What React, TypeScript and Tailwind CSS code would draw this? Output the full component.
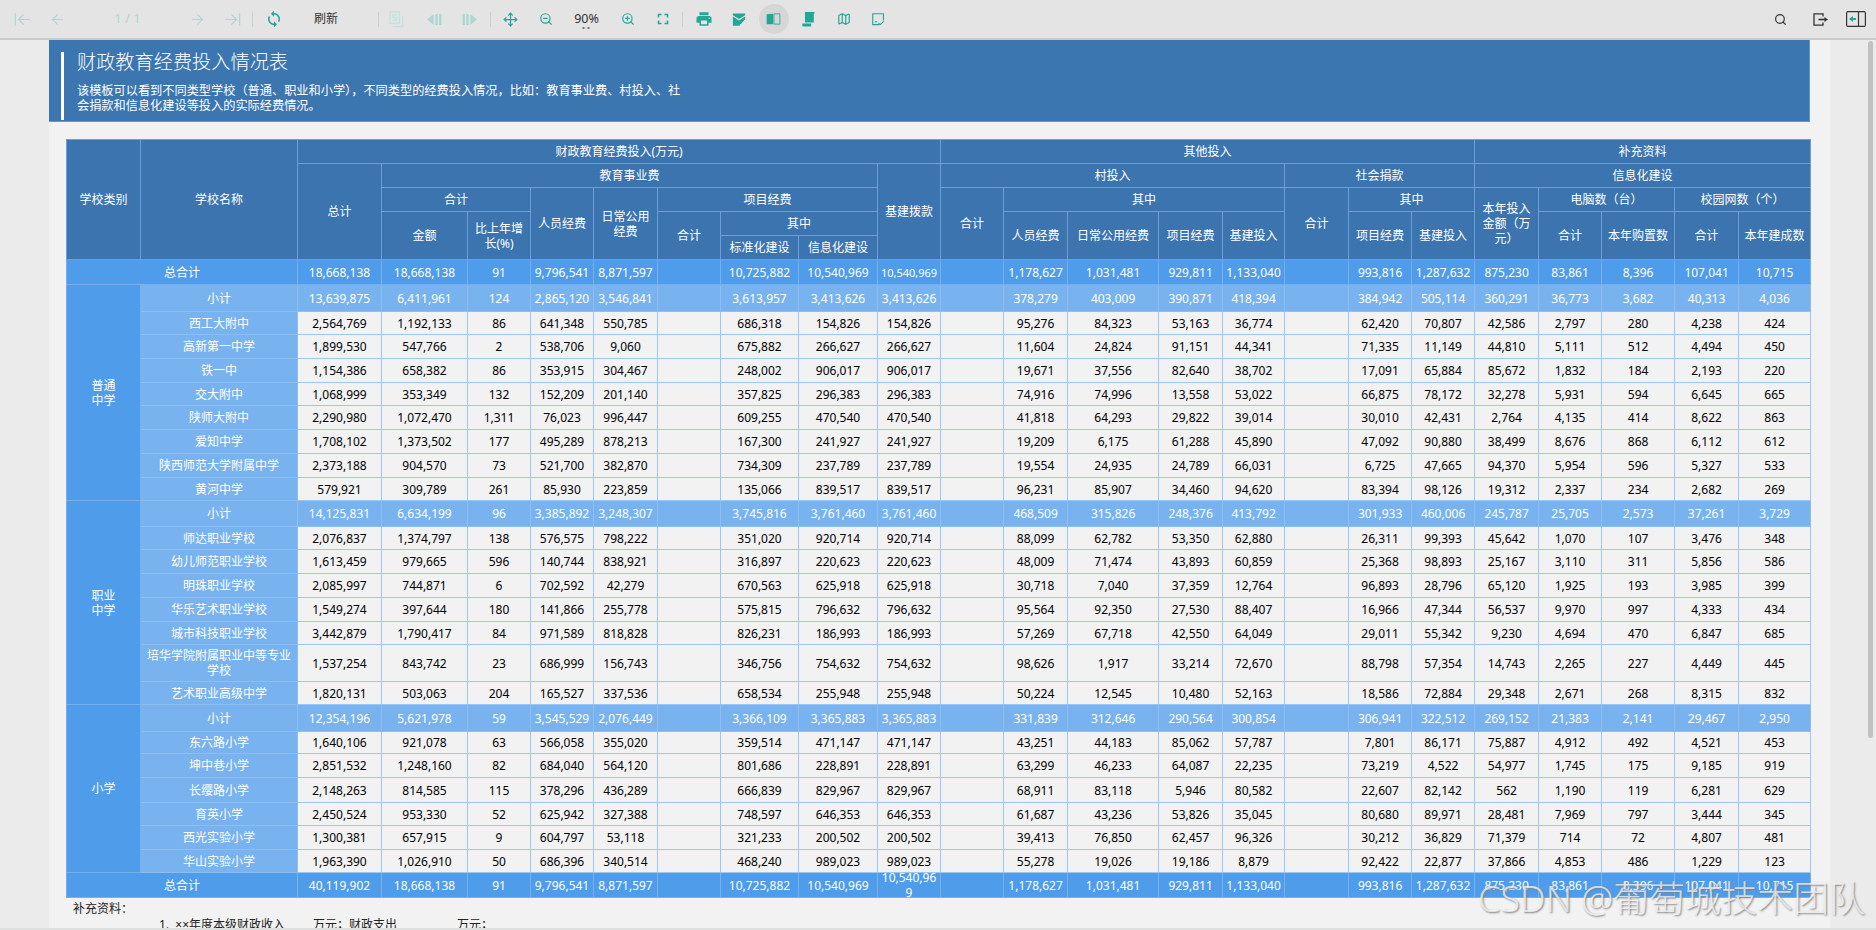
import { ArrowLeftToLine, ArrowLeft, ArrowRight, ArrowRightToLine, Search, ZoomIn, ZoomOut, Move, Map as MapIcon } from "lucide-react";
import { MdSync, MdPrint, MdFullscreen } from "react-icons/md";

const colWidths = [
  "w-[74px]", "w-[157px]", "w-[84px]", "w-[86px]", "w-[63px]", "w-[63px]", "w-[64px]", "w-[63px]",
  "w-[78px]", "w-[79px]", "w-[63px]", "w-[63px]", "w-[64px]", "w-[91px]", "w-[64px]", "w-[62px]",
  "w-[64px]", "w-[63px]", "w-[63px]", "w-[64px]", "w-[63px]", "w-[73px]", "w-[64px]", "w-[72px]",
];

type Row = { name: string; vals: string; h: string };

const groups: { label: string[]; rows: Row[] }[] = [
  {
    label: ["普通", "中学"],
    rows: [
      { name: "小计", h: "h-[27px]", vals: "13,639,875 6,411,961 124 2,865,120 3,546,841 _ 3,613,957 3,413,626 3,413,626 _ 378,279 403,009 390,871 418,394 _ 384,942 505,114 360,291 36,773 3,682 40,313 4,036" },
      { name: "西工大附中", h: "h-[23px]", vals: "2,564,769 1,192,133 86 641,348 550,785 _ 686,318 154,826 154,826 _ 95,276 84,323 53,163 36,774 _ 62,420 70,807 42,586 2,797 280 4,238 424" },
      { name: "高新第一中学", h: "h-[24px]", vals: "1,899,530 547,766 2 538,706 9,060 _ 675,882 266,627 266,627 _ 11,604 24,824 91,151 44,341 _ 71,335 11,149 44,810 5,111 512 4,494 450" },
      { name: "铁一中", h: "h-[24px]", vals: "1,154,386 658,382 86 353,915 304,467 _ 248,002 906,017 906,017 _ 19,671 37,556 82,640 38,702 _ 17,091 65,884 85,672 1,832 184 2,193 220" },
      { name: "交大附中", h: "h-[23px]", vals: "1,068,999 353,349 132 152,209 201,140 _ 357,825 296,383 296,383 _ 74,916 74,996 13,558 53,022 _ 66,875 78,172 32,278 5,931 594 6,645 665" },
      { name: "陕师大附中", h: "h-[24px]", vals: "2,290,980 1,072,470 1,311 76,023 996,447 _ 609,255 470,540 470,540 _ 41,818 64,293 29,822 39,014 _ 30,010 42,431 2,764 4,135 414 8,622 863" },
      { name: "爱知中学", h: "h-[24px]", vals: "1,708,102 1,373,502 177 495,289 878,213 _ 167,300 241,927 241,927 _ 19,209 6,175 61,288 45,890 _ 47,092 90,880 38,499 8,676 868 6,112 612" },
      { name: "陕西师范大学附属中学", h: "h-[24px]", vals: "2,373,188 904,570 73 521,700 382,870 _ 734,309 237,789 237,789 _ 19,554 24,935 24,789 66,031 _ 6,725 47,665 94,370 5,954 596 5,327 533" },
      { name: "黄河中学", h: "h-[23px]", vals: "579,921 309,789 261 85,930 223,859 _ 135,066 839,517 839,517 _ 96,231 85,907 34,460 94,620 _ 83,394 98,126 19,312 2,337 234 2,682 269" },
    ],
  },
  {
    label: ["职业", "中学"],
    rows: [
      { name: "小计", h: "h-[26px]", vals: "14,125,831 6,634,199 96 3,385,892 3,248,307 _ 3,745,816 3,761,460 3,761,460 _ 468,509 315,826 248,376 413,792 _ 301,933 460,006 245,787 25,705 2,573 37,261 3,729" },
      { name: "师达职业学校", h: "h-[23px]", vals: "2,076,837 1,374,797 138 576,575 798,222 _ 351,020 920,714 920,714 _ 88,099 62,782 53,350 62,880 _ 26,311 99,393 45,642 1,070 107 3,476 348" },
      { name: "幼儿师范职业学校", h: "h-[24px]", vals: "1,613,459 979,665 596 140,744 838,921 _ 316,897 220,623 220,623 _ 48,009 71,474 43,893 60,859 _ 25,368 98,893 25,167 3,110 311 5,856 586" },
      { name: "明珠职业学校", h: "h-[24px]", vals: "2,085,997 744,871 6 702,592 42,279 _ 670,563 625,918 625,918 _ 30,718 7,040 37,359 12,764 _ 96,893 28,796 65,120 1,925 193 3,985 399" },
      { name: "华乐艺术职业学校", h: "h-[24px]", vals: "1,549,274 397,644 180 141,866 255,778 _ 575,815 796,632 796,632 _ 95,564 92,350 27,530 88,407 _ 16,966 47,344 56,537 9,970 997 4,333 434" },
      { name: "城市科技职业学校", h: "h-[23px]", vals: "3,442,879 1,790,417 84 971,589 818,828 _ 826,231 186,993 186,993 _ 57,269 67,718 42,550 64,049 _ 29,011 55,342 9,230 4,694 470 6,847 685" },
      { name: "培华学院附属职业中等专业学校", h: "h-[37px]", vals: "1,537,254 843,742 23 686,999 156,743 _ 346,756 754,632 754,632 _ 98,626 1,917 33,214 72,670 _ 88,798 57,354 14,743 2,265 227 4,449 445" },
      { name: "艺术职业高级中学", h: "h-[23px]", vals: "1,820,131 503,063 204 165,527 337,536 _ 658,534 255,948 255,948 _ 50,224 12,545 10,480 52,163 _ 18,586 72,884 29,348 2,671 268 8,315 832" },
    ],
  },
  {
    label: ["小学"],
    rows: [
      { name: "小计", h: "h-[27px]", vals: "12,354,196 5,621,978 59 3,545,529 2,076,449 _ 3,366,109 3,365,883 3,365,883 _ 331,839 312,646 290,564 300,854 _ 306,941 322,512 269,152 21,383 2,141 29,467 2,950" },
      { name: "东六路小学", h: "h-[22px]", vals: "1,640,106 921,078 63 566,058 355,020 _ 359,514 471,147 471,147 _ 43,251 44,183 85,062 57,787 _ 7,801 86,171 75,887 4,912 492 4,521 453" },
      { name: "坤中巷小学", h: "h-[24px]", vals: "2,851,532 1,248,160 82 684,040 564,120 _ 801,686 228,891 228,891 _ 63,299 46,233 64,087 22,235 _ 73,219 4,522 54,977 1,745 175 9,185 919" },
      { name: "长缨路小学", h: "h-[25px]", vals: "2,148,263 814,585 115 378,296 436,289 _ 666,839 829,967 829,967 _ 68,911 83,118 5,946 80,582 _ 22,607 82,142 562 1,190 119 6,281 629" },
      { name: "育英小学", h: "h-[23px]", vals: "2,450,524 953,330 52 625,942 327,388 _ 748,597 646,353 646,353 _ 61,687 43,236 53,826 35,045 _ 80,680 89,971 28,481 7,969 797 3,444 345" },
      { name: "西光实验小学", h: "h-[24px]", vals: "1,300,381 657,915 9 604,797 53,118 _ 321,233 200,502 200,502 _ 39,413 76,850 62,457 96,326 _ 30,212 36,829 71,379 714 72 4,807 481" },
      { name: "华山实验小学", h: "h-[23px]", vals: "1,963,390 1,026,910 50 686,396 340,514 _ 468,240 989,023 989,023 _ 55,278 19,026 19,186 8,879 _ 92,422 22,877 37,866 4,853 486 1,229 123" },
    ],
  },
];

const topTotal = "18,668,138 18,668,138 91 9,796,541 8,871,597 _ 10,725,882 10,540,969 10,540,969 _ 1,178,627 1,031,481 929,811 1,133,040 _ 993,816 1,287,632 875,230 83,861 8,396 107,041 10,715";
const bottomTotal = "40,119,902 18,668,138 91 9,796,541 8,871,597 _ 10,725,882 10,540,969 10,540,969 _ 1,178,627 1,031,481 929,811 1,133,040 _ 993,816 1,287,632 875,230 83,861 8,396 107,041 10,715";

const th = "border border-[#6a9fd8] bg-[#3b74ae] px-[4px] text-center align-middle font-normal text-white";
const totalTd = "border border-[#78b0ec] bg-[#4f9cea] px-0 text-center text-white";
const subTd = "border border-[#8cbef2] bg-[#78b3ef] px-0 text-center text-white";
const bodyTd = "border border-[#9cc6f3] bg-[#f2f2f2] px-0 text-center text-black";
const nameTd = "border border-[#8cbef2] bg-[#78b3ef] px-[4px] text-center text-white";

function Btn({ children, className = "w-[35px]" }: { children: React.ReactNode; className?: string }) {
  return <div className={`flex h-full shrink-0 items-center justify-center ${className}`}>{children}</div>;
}

function Sep() {
  return <div className="h-[15px] w-px shrink-0 bg-[#cfcfcf]" />;
}

function SectionPrev({ flip }: { flip?: boolean }) {
  return (
    <svg width="15" height="13" viewBox="0 0 16 14" fill="#a9d8d2" className={flip ? "-scale-x-100" : ""}>
      <path d="M0 7 7 1v12z" />
      <rect x="9" y="1" width="2.4" height="12" />
      <rect x="13" y="1" width="2.4" height="12" />
    </svg>
  );
}

function Toolbar() {
  return (
    <div className="flex h-[40px] shrink-0 items-center border-b-2 border-[#cacaca] bg-[#e4e4e4] pl-[5px] pr-[4px] text-[#23a696]">
      <Btn><ArrowLeftToLine size={19} strokeWidth={1.5} className="text-[#a9d8d2]" /></Btn>
      <Btn><ArrowLeft size={17} strokeWidth={1.5} className="text-[#a9d8d2]" /></Btn>
      <Btn className="w-[105px]"><span className="text-[13px] text-[#a9d8d2]">1 / 1</span></Btn>
      <Btn><ArrowRight size={17} strokeWidth={1.5} className="text-[#a9d8d2]" /></Btn>
      <Btn><ArrowRightToLine size={19} strokeWidth={1.5} className="text-[#a9d8d2]" /></Btn>
      <div className="ml-[2px]"><Sep /></div>
      <Btn className="ml-[3px] w-[35px]"><MdSync size={18} /></Btn>
      <Btn className="w-[70px]"><span className="text-[12px] text-[#333333]">刷新</span></Btn>
      <div className="ml-[17px]"><Sep /></div>
      <Btn>
        <svg width="15" height="17" viewBox="0 0 16 18" fill="none" stroke="#bfe3de" strokeWidth="1.4">
          <rect x="1" y="1" width="10" height="12" />
          <path d="M4 16.5h10.5V5" />
          <path d="M8.5 4H4.5v3h3v3h-3" />
        </svg>
      </Btn>
      <Btn className="ml-[3px] w-[35px]"><SectionPrev /></Btn>
      <Btn><SectionPrev flip /></Btn>
      <div className="ml-[3px]"><Sep /></div>
      <Btn className="ml-[2px] w-[35px]"><Move size={15} strokeWidth={2} /></Btn>
      <Btn><ZoomOut size={14} strokeWidth={2} /></Btn>
      <Btn className="w-[47px]">
        <div className="relative text-[12.5px] text-[#333333]">
          90%
          <div className="absolute left-1/2 top-[17px] h-[2px] w-[7px] -translate-x-1/2 border-x-2 border-[#777777] bg-[#e4e4e4]" />
        </div>
      </Btn>
      <Btn><ZoomIn size={14} strokeWidth={2} /></Btn>
      <Btn><MdFullscreen size={18} /></Btn>
      <div className="ml-[2px]"><Sep /></div>
      <Btn className="ml-[3px] w-[35px]"><MdPrint size={18} /></Btn>
      <Btn>
        <svg width="14" height="13" viewBox="0 0 16 14" fill="#23a696">
          <path d="M1 0h14v2L8 6.5 1 2z" />
          <path d="M1 3.5 8 8l7-4.5V7l-5 5.5-1-.5V14H1z" />
          <path d="M10.5 13l5-6" stroke="#e4e4e4" strokeWidth="1" />
        </svg>
      </Btn>
      <Btn>
        <div className="flex h-[30px] w-[30px] items-center justify-center rounded-full bg-[#d6d6d6]">
          <svg width="15" height="12" viewBox="0 0 16 14">
            <path d="M0 1.5 7.5 1v12H0z" fill="#23a696" />
            <path d="M8.500 1H15.500v12H8.500z" fill="none" stroke="#23a696" />
          </svg>
        </div>
      </Btn>
      <Btn>
        <svg width="13" height="15" viewBox="0 0 14 17" fill="#23a696">
          <path d="M3 0h11l-1 3v9H3z" />
          <path d="M0 13h10v3.5H1.5A1.5 1.5 0 0 1 0 15z" />
        </svg>
      </Btn>
      <Btn><MapIcon size={14} strokeWidth={2} /></Btn>
      <Btn>
        <svg width="13" height="13" viewBox="0 0 14 14" fill="none" stroke="#23a696" strokeWidth="1.2">
          <path d="M8 12.500H.8V.8h11.500V8" />
          <path d="M7 11l2 1.500 3.500-3.500" />
          <path d="M3 9.500h2.500" />
        </svg>
      </Btn>
      <div className="ml-auto flex h-full items-center text-[#333333]">
        <Btn className="w-[40px]"><Search size={13} strokeWidth={2.2} /></Btn>
        <Btn className="w-[40px]">
          <svg width="15" height="13" viewBox="0 0 15 13" fill="none" stroke="#333333" strokeWidth="1.3">
            <path d="M10 3.5V.8H1v11.4h9V9.500" />
            <path d="M5.500 6.500h7" strokeWidth="1.6" />
            <path d="M11.500 4 15 6.500 11.500 9z" fill="#333333" stroke="none" />
          </svg>
        </Btn>
        <Btn className="w-[32px]">
          <svg width="20" height="16" viewBox="0 0 20 16" fill="none">
            <rect x=".6" y=".6" width="18.8" height="14.8" rx="1.5" stroke="#333333" strokeWidth="1.2" />
            <path d="M12.5 1v14" stroke="#333333" strokeWidth="1.2" />
            <path d="M3 8l4-3v2h3v2H7v2z" fill="#23a696" />
          </svg>
        </Btn>
      </div>
    </div>
  );
}

function Banner() {
  return (
    <div className="h-[82px] border-b border-r border-[#5d97d6] bg-[#3c76b0] pl-[12px] pt-[12px] text-white">
      <div className="h-[68px] border-l-[3px] border-white pl-[13px]">
        <div className="text-[19.2px] font-light leading-[20px]">财政教育经费投入情况表</div>
        <div className="mt-[12px] w-[604px] text-[12.2px] leading-[14.5px]">
          该模板可以看到不同类型学校（普通、职业和小学），不同类型的经费投入情况，比如：教育事业费、村投入、社会捐款和信息化建设等投入的实际经费情况。
        </div>
      </div>
    </div>
  );
}

function ReportTable() {
  const topVals = topTotal.split(" ");
  const bottomVals = bottomTotal.split(" ");
  return (
    <table className="w-[1744px] table-fixed border-collapse text-[12px] leading-[15px]">
      <colgroup>
        {colWidths.map((w, i) => <col key={i} className={w} />)}
      </colgroup>
      <thead>
        <tr className="h-[24px]">
          <th rowSpan={5} className={th}>学校类别</th>
          <th rowSpan={5} className={th}>学校名称</th>
          <th colSpan={9} className={th}>财政教育经费投入(万元)</th>
          <th colSpan={8} className={th}>其他投入</th>
          <th colSpan={5} className={th}>补充资料</th>
        </tr>
        <tr className="h-[24px]">
          <th rowSpan={4} className={th}>总计</th>
          <th colSpan={7} className={th}>教育事业费</th>
          <th rowSpan={4} className={th}>基建拨款</th>
          <th colSpan={5} className={th}>村投入</th>
          <th colSpan={3} className={th}>社会捐款</th>
          <th colSpan={5} className={th}>信息化建设</th>
        </tr>
        <tr className="h-[24px]">
          <th colSpan={2} className={th}>合计</th>
          <th rowSpan={3} className={th}>人员经费</th>
          <th rowSpan={3} className={th}>日常公用经费</th>
          <th colSpan={3} className={th}>项目经费</th>
          <th rowSpan={3} className={th}>合计</th>
          <th colSpan={4} className={th}>其中</th>
          <th rowSpan={3} className={th}>合计</th>
          <th colSpan={2} className={th}>其中</th>
          <th rowSpan={3} className={th}>本年投入金额（万元）</th>
          <th colSpan={2} className={th}>电脑数（台）</th>
          <th colSpan={2} className={th}>校园网数（个）</th>
        </tr>
        <tr className="h-[24px]">
          <th rowSpan={2} className={th}>金额</th>
          <th rowSpan={2} className={th}>比上年增长(%)</th>
          <th rowSpan={2} className={th}>合计</th>
          <th colSpan={2} className={th}>其中</th>
          <th rowSpan={2} className={th}>人员经费</th>
          <th rowSpan={2} className={th}>日常公用经费</th>
          <th rowSpan={2} className={th}>项目经费</th>
          <th rowSpan={2} className={th}>基建投入</th>
          <th rowSpan={2} className={th}>项目经费</th>
          <th rowSpan={2} className={th}>基建投入</th>
          <th rowSpan={2} className={th}>合计</th>
          <th rowSpan={2} className={th}>本年购置数</th>
          <th rowSpan={2} className={th}>合计</th>
          <th rowSpan={2} className={th}>本年建成数</th>
        </tr>
        <tr className="h-[24px]">
          <th className={th}>标准化建设</th>
          <th className={th}>信息化建设</th>
        </tr>
      </thead>
      <tbody>
        <tr className="h-[25px]">
          <td colSpan={2} className={totalTd}>总合计</td>
          {topVals.map((v, i) => (
            <td key={i} className={i === 8 ? `${totalTd} text-[11px]` : totalTd}>{v === "_" ? "" : v}</td>
          ))}
        </tr>
        {groups.map((g) =>
          g.rows.map((r, i) => (
            <tr key={g.label[0] + r.name} className={r.h}>
              {i === 0 && (
                <td rowSpan={g.rows.length} className="border border-[#78b0ec] bg-[#4f9cea] text-center text-white">
                  {g.label.map((l) => <div key={l}>{l}</div>)}
                </td>
              )}
              <td className={nameTd}>{r.name}</td>
              {r.vals.split(" ").map((v, j) => (
                <td key={j} className={i === 0 ? subTd : bodyTd}>{v === "_" ? "" : v}</td>
              ))}
            </tr>
          ))
        )}
        <tr className="h-[25px]">
          <td colSpan={2} className={totalTd}>总合计</td>
          {bottomVals.map((v, i) => (
            <td key={i} className={totalTd}>
              {i === 8 ? (
                <div className="flex h-[20px] flex-col items-center justify-center">
                  <span>10,540,96</span>
                  <span>9</span>
                </div>
              ) : v === "_" ? "" : v}
            </td>
          ))}
        </tr>
      </tbody>
    </table>
  );
}

export default function App() {
  return (
    <div className="relative flex h-[930px] w-[1876px] flex-col overflow-hidden bg-[#ebebeb] font-['Noto_Sans','Noto_Sans_CJK_SC',sans-serif]">
      <Toolbar />
      <div className="flex min-h-0 flex-1">
        <div className="w-[49px] shrink-0 bg-[#ebebeb]" />
        <div className="w-[1781px] shrink-0 overflow-hidden bg-[#f2f2f2] pr-[20px]">
          <Banner />
          <div className="mt-[17px] pl-[17px]">
            <ReportTable />
            <div className="pl-[7px] pt-[3px] text-[12px] leading-[16px] text-[#222222]">
              <div>补充资料：</div>
              <div className="flex pl-[86px]">
                <span className="w-[154px]">1.&nbsp;&nbsp;××年度本级财政收入</span>
                <span className="w-[36px]">万元；</span>
                <span className="w-[108px]">财政支出</span>
                <span>万元；</span>
              </div>
            </div>
          </div>
        </div>
        <div className="flex w-[46px] shrink-0 justify-end pr-[3px] pt-px">
          <div className="h-[697px] w-[5px] rounded-full bg-[#c2c2c2]" />
        </div>
      </div>
      <div className="h-[2px] shrink-0 bg-[#dce0df]" />
      <div className="absolute left-[1478px] top-[876px] whitespace-nowrap text-[36px] font-light leading-[46px] text-white/70 [text-shadow:1px_1px_2px_#808080]">
        CSDN @葡萄城技术团队
      </div>
    </div>
  );
}
